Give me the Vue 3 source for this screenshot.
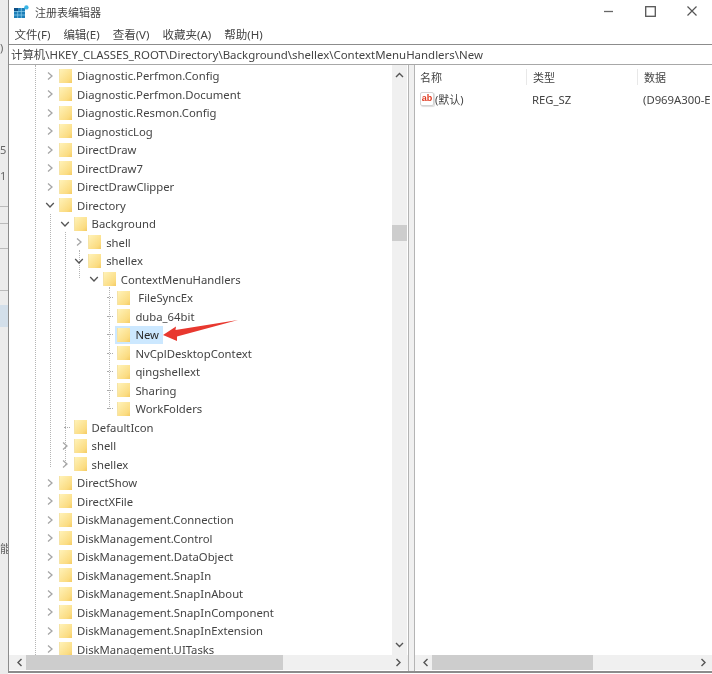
<script setup>
const rows = [
  ['Diagnostic.Perfmon.Config', 0, 'c'], ['Diagnostic.Perfmon.Document', 0, 'c'], ['Diagnostic.Resmon.Config', 0, 'c'],
  ['DiagnosticLog', 0, 'c'], ['DirectDraw', 0, 'c'], ['DirectDraw7', 0, 'c'], ['DirectDrawClipper', 0, 'c'],
  ['Directory', 0, 'e'], ['Background', 1, 'e'], ['shell', 2, 'c'], ['shellex', 2, 'e'], ['ContextMenuHandlers', 3, 'e'],
  [' FileSyncEx', 4, 'l'], ['duba_64bit', 4, 'l'], ['New', 4, 'l', true], ['NvCplDesktopContext', 4, 'l'],
  ['qingshellext', 4, 'l'], ['Sharing', 4, 'l'], ['WorkFolders', 4, 'l'], ['DefaultIcon', 1, 'l'], ['shell', 1, 'c'], ['shellex', 1, 'c'],
  ['DirectShow', 0, 'c'], ['DirectXFile', 0, 'c'], ['DiskManagement.Connection', 0, 'c'], ['DiskManagement.Control', 0, 'c'],
  ['DiskManagement.DataObject', 0, 'c'], ['DiskManagement.SnapIn', 0, 'c'], ['DiskManagement.SnapInAbout', 0, 'c'],
  ['DiskManagement.SnapInComponent', 0, 'c'], ['DiskManagement.SnapInExtension', 0, 'c'], ['DiskManagement.UITasks', 0, 'c'],
].map(([name, depth, kind, selected]) => ({ name, kind, selected, pad: 36 + 14.6 * depth }))

const menus = ['文件(F)', '编辑(E)', '查看(V)', '收藏夹(A)', '帮助(H)']
const guides = [
  { x: 26, top: 0, h: 590 }, { x: 41, top: 149, h: 253 }, { x: 56, top: 167, h: 233 },
  { x: 70, top: 185, h: 28 }, { x: 100, top: 222, h: 122 },
]
const marks = [
  { t: ')', y: 40 }, { t: '5', y: 142 }, { t: '1', y: 168 }, { t: '能', y: 540 },
]
const ticks = [206, 223, 248, 290, 326]
</script>

<template>
  <div class="root">
    <div class="strip">
      <span v-for="m in marks" :key="m.y" class="mark" :style="{ top: m.y + 'px' }">{{ m.t }}</span>
      <i v-for="t in ticks" :key="t" class="tick" :style="{ top: t + 'px' }"></i>
      <i class="smudge"></i>
    </div>
    <div class="window">
      <header class="titlebar">
        <svg class="appicon" width="15" height="14" viewBox="0 0 15 14">
          <rect x="0" y="3" width="11" height="10" fill="#1d7fb8" />
          <path d="M0 6.5h11M0 10h11M3.7 3v10M7.3 3v10" stroke="#8fd0ee" stroke-width=".7" />
          <rect x="0" y="3" width="4" height="3" fill="#0f4f86" />
          <circle cx="12.4" cy="2.4" r="2.2" fill="#39b5e6" />
        </svg>
        <span class="title">注册表编辑器</span>
        <div class="controls">
          <svg width="10" height="10" viewBox="0 0 10 10"><path d="M0 5.500h9" stroke="#666" stroke-width="1.300" /></svg>
          <svg width="11" height="11" viewBox="0 0 11 11"><rect x=".7" y=".7" width="9.600" height="9.600" fill="none" stroke="#555" stroke-width="1.300" /></svg>
          <svg width="10" height="10" viewBox="0 0 10 10"><path d="M.5.5l9 9M9.500.5l-9 9" stroke="#555" stroke-width="1.200" /></svg>
        </div>
      </header>
      <nav class="menubar">
        <span v-for="m in menus" :key="m">{{ m }}</span>
      </nav>
      <div class="address">计算机\HKEY_CLASSES_ROOT\Directory\Background\shellex\ContextMenuHandlers\New</div>
      <div class="panes">
        <section class="treepane">
          <div class="treewrap">
            <div class="tree">
              <i v-for="g in guides" :key="g.x" class="guide" :style="{ left: g.x + 'px', top: g.top + 'px', height: g.h + 'px' }"></i>
              <div v-for="(r, i) in rows" :key="i" class="row" :style="{ paddingLeft: r.pad + 'px' }">
                <span class="exp">
                  <svg v-if="r.kind === 'c'" width="10" height="10" viewBox="0 0 10 10"><path d="M3 1.500L7 5 3 8.500" fill="none" stroke="#a6a6a6" stroke-width="1.300" /></svg>
                  <svg v-else-if="r.kind === 'e'" width="10" height="10" viewBox="0 0 10 10"><path d="M1.200 3L5 7l3.800-4" fill="none" stroke="#555" stroke-width="1.300" /></svg>
                  <i v-else class="lead"></i>
                </span>
                <span class="folder" :class="{ on: r.selected }"></span>
                <span class="name" :class="{ on: r.selected }">{{ r.name }}</span>
              </div>
              <svg class="arrow" width="80" height="24" viewBox="0 0 80 24">
                <path d="M1 18L14 9.500 13.500 13 76 3 15 19.500 15 24z" fill="#e8382f" />
              </svg>
            </div>
            <div class="vscroll">
              <svg width="15" height="10" viewBox="0 0 15 10"><path d="M4 7l3.500-3.500L11 7" fill="none" stroke="#555" stroke-width="1.400" /></svg>
              <i class="vthumb"></i>
              <svg width="15" height="10" viewBox="0 0 15 10"><path d="M4 3l3.500 3.500L11 3" fill="none" stroke="#555" stroke-width="1.400" /></svg>
            </div>
          </div>
          <div class="hscroll">
            <svg width="10" height="15" viewBox="0 0 10 15"><path d="M6.500 4L3 7.500 6.500 11" fill="none" stroke="#555" stroke-width="1.400" /></svg>
            <i class="hthumb"></i>
            <svg width="10" height="15" viewBox="0 0 10 15"><path d="M3.500 4L7 7.500 3.500 11" fill="none" stroke="#555" stroke-width="1.400" /></svg>
          </div>
        </section>
        <div class="splitter"></div>
        <section class="listpane">
          <div class="listhead">
            <span class="c1">名称</span><span class="c2">类型</span><span class="c3">数据</span>
          </div>
          <div class="listrow">
            <span class="c1 val"><span class="ab">ab</span>(默认)</span>
            <span class="c2">REG_SZ</span>
            <span class="c3">(D969A300-E</span>
          </div>
          <div class="listfill"></div>
          <div class="hscroll right">
            <svg width="10" height="15" viewBox="0 0 10 15"><path d="M6.500 4L3 7.500 6.500 11" fill="none" stroke="#555" stroke-width="1.400" /></svg>
            <i class="hthumb wide"></i>
            <svg width="10" height="15" viewBox="0 0 10 15"><path d="M3.500 4L7 7.500 3.500 11" fill="none" stroke="#555" stroke-width="1.400" /></svg>
          </div>
        </section>
      </div>
    </div>
  </div>
</template>

<style scoped>
.root {
  width: 712px;
  height: 674px;
  display: flex;
  overflow: hidden;
  background: #fff;
  color: #333;
  font: 11.300px "Noto Sans", "Noto Sans CJK SC", sans-serif;
  filter: blur(0.45px);
}
.strip {
  position: relative;
  width: 8px;
  flex: none;
  background: #ececec;
  overflow: hidden;
}
.mark {
  position: absolute;
  left: 0;
  font-size: 11px;
  color: #666;
}
.tick {
  position: absolute;
  left: 0;
  width: 8px;
  height: 1px;
  background: #bbb;
}
.smudge {
  position: absolute;
  left: 0;
  top: 305px;
  width: 8px;
  height: 22px;
  background: #d3dfea;
}
.window {
  flex: 1;
  min-width: 0;
  display: flex;
  flex-direction: column;
  height: 673px;
  box-sizing: border-box;
  border-left: 1.500px solid #8c8c8c;
  border-bottom: 2px solid #8c8c8c;
}
.titlebar {
  height: 24px;
  flex: none;
  display: flex;
  align-items: center;
  padding-left: 5px;
}
.appicon {
  margin-right: 6px;
}
.title {
  font-size: 11px;
  color: #444;
}
.controls {
  margin-left: auto;
  display: flex;
  align-items: center;
  gap: 31px;
  padding-right: 15px;
  margin-top: -2px;
}
.menubar {
  height: 20px;
  flex: none;
  display: flex;
  gap: 13px;
  padding-left: 5.500px;
  align-items: center;
  font-size: 11.500px;
  color: #444;
}
.address {
  height: 21px;
  flex: none;
  box-sizing: border-box;
  border-top: 1.500px solid #8c8c8c;
  border-bottom: 1.500px solid #a8a8a8;
  padding-left: 2px;
  line-height: 19px;
  white-space: nowrap;
  font-size: 11.450px;
  color: #444;
}
.panes {
  flex: 1;
  min-height: 0;
  display: flex;
}
.treepane {
  width: 399px;
  flex: none;
  display: flex;
  flex-direction: column;
}
.treewrap {
  flex: 1;
  min-height: 0;
  display: flex;
}
.tree {
  position: relative;
  flex: 1;
  min-width: 0;
  overflow: hidden;
  padding-top: 1.500px;
  isolation: isolate;
}
.guide {
  position: absolute;
  width: 0;
  border-left: 1px dotted #b5b5b5;
}
.row {
  position: relative;
  height: 18.500px;
  display: flex;
  align-items: center;
  white-space: pre;
}
.exp {
  width: 10px;
  height: 10px;
  flex: none;
  display: flex;
  align-items: center;
  justify-content: center;
}
.lead {
  width: 7px;
  border-top: 1px dotted #aaa;
  margin-left: 4px;
}
.folder {
  position: relative;
  flex: none;
  width: 13px;
  height: 14px;
  margin-left: 4px;
  margin-right: 5px;
  background: linear-gradient(135deg, #fff2b8, #fbdc82 75%, #f4cb63);
  border-left: 1px solid #f5e3a6;
  box-sizing: border-box;
}
.name {
  color: #444;
}
.name.on {
  color: #2a2a2a;
}
.folder.on::before {
  content: "";
  position: absolute;
  left: -3px;
  top: -2px;
  width: 48px;
  height: 18px;
  background: #cce8ff;
  z-index: -1;
}
.arrow {
  position: absolute;
  left: 153px;
  top: 252px;
}
.vscroll {
  width: 15px;
  flex: none;
  margin-right: 1px;
  background: #f0f0f0;
  display: flex;
  flex-direction: column;
  padding: 5px 0;
  box-sizing: border-box;
  justify-content: space-between;
  position: relative;
}
.vthumb {
  position: absolute;
  left: 0;
  top: 160px;
  width: 15px;
  height: 16px;
  background: #cdcdcd;
}
.hscroll {
  height: 15px;
  flex: none;
  background: #f0f0f0;
  display: flex;
  align-items: center;
  padding: 0 5px 0 6px;
  margin-bottom: 1px;
}
.hthumb {
  width: 257px;
  height: 100%;
  margin-left: 1px;
  margin-right: auto;
  background: #cdcdcd;
}
.hthumb.wide {
  width: 161px;
  margin-left: 1px;
}
.splitter {
  width: 7px;
  flex: none;
  box-sizing: border-box;
  border-left: 1.500px solid #b4b4b4;
  border-right: 1.500px solid #b4b4b4;
  background: #f0f0f0;
}
.listpane {
  flex: 1;
  min-width: 0;
  display: flex;
  flex-direction: column;
}
.listhead,
.listrow {
  display: grid;
  grid-template-columns: 112px 111px 1fr;
  padding-left: 5px;
  white-space: nowrap;
  overflow: hidden;
  color: #444;
}
.listhead {
  height: 24px;
  align-items: center;
  font-size: 11px;
}
.listhead span + span {
  border-left: 1px solid #e8e8e8;
  margin-left: -6px;
  padding-left: 6px;
}
.listrow {
  height: 20px;
  align-items: center;
}
.val {
  display: flex;
  align-items: center;
  font-size: 11px;
}
.ab {
  width: 14px;
  height: 14px;
  margin-right: 1px;
  box-sizing: border-box;
  border: 1px solid #d4d4d4;
  border-radius: 2px;
  font: bold 9px/10px "Liberation Sans", sans-serif;
  color: #e0391f;
  text-align: center;
  box-shadow: 1px 1px 1px #ddd;
}
.listfill {
  flex: 1;
}
.right {
  padding-right: 4px;
}
</style>
